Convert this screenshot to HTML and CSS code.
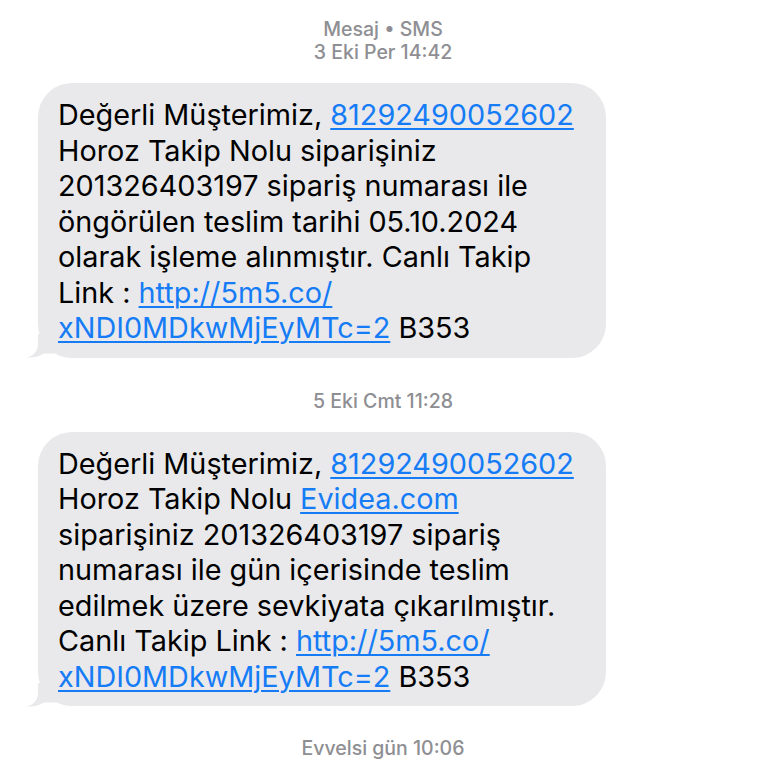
FILE: index.html
```html
<!DOCTYPE html>
<html lang="tr">
<head>
<meta charset="utf-8">
<link rel="stylesheet" href="styles.css">
</head>
<body>
<div class="thread">
  <div class="stamp stamp-top">
    <div>Mesaj • SMS</div>
    <div>3 Eki Per 14:42</div>
  </div>
  <div class="bubble">
    <p class="msg">Değerli Müşterimiz, <a>81292490052602</a><br>Horoz Takip Nolu siparişiniz<br>201326403197 sipariş numarası ile<br>öngörülen teslim tarihi 05.10.2024<br>olarak işleme alınmıştır. Canlı Takip<br>Link : <a>http://5m5.co/<br>xNDI0MDkwMjEyMTc=2</a> B353</p>
    <svg class="tail" width="30" height="24" viewBox="0 0 30 24"><path d="M11 0 L11 10 C11 16 8 21 0 23.5 C7 24 13 22 17 19.5 L30 19.5 L30 0 Z" fill="#e9e9eb"/></svg>
  </div>
  <div class="stamp stamp-mid">5 Eki Cmt 11:28</div>
  <div class="bubble">
    <p class="msg">Değerli Müşterimiz, <a>81292490052602</a><br>Horoz Takip Nolu <a>Evidea.com</a><br>siparişiniz 201326403197 sipariş<br>numarası ile gün içerisinde teslim<br>edilmek üzere sevkiyata çıkarılmıştır.<br>Canlı Takip Link : <a>http://5m5.co/<br>xNDI0MDkwMjEyMTc=2</a> B353</p>
    <svg class="tail" width="30" height="24" viewBox="0 0 30 24"><path d="M11 0 L11 10 C11 16 8 21 0 23.5 C7 24 13 22 17 19.5 L30 19.5 L30 0 Z" fill="#e9e9eb"/></svg>
  </div>
  <div class="stamp stamp-bottom">Evvelsi gün 10:06</div>
</div>
</body>
</html>
```
FILE: styles.css
```css
html, body {
  margin: 0;
  padding: 0;
  background: #ffffff;
}
body {
  width: 768px;
  height: 768px;
  overflow: hidden;
  font-family: Inter, "Liberation Sans", sans-serif;
}
.thread {
  display: flex;
  flex-direction: column;
  padding-top: 18px;
}
.stamp {
  text-align: center;
  color: #8e8e93;
  font-size: 19.5px;
  line-height: 23px;
  font-weight: 500;
  padding-right: 2px;
}
.stamp-top { margin-bottom: 19px; }
.stamp-mid { margin-top: 32px; margin-bottom: 19px; }
.stamp-bottom { margin-top: 31px; }
.bubble {
  position: relative;
  margin-left: 38px;
  width: 568px;
  box-sizing: border-box;
  background: #e9e9eb;
  border-radius: 34px;
  padding: 14px 20px 12px 20px;
}
.msg {
  margin: 0;
  font-size: 28.8px;
  line-height: 35.5px;
  color: #000;
  white-space: nowrap;
}
.msg a {
  color: #157cf6;
  text-decoration: underline;
  text-decoration-thickness: 1.5px;
  text-underline-offset: 3px;
}
.tail {
  position: absolute;
  left: -11px;
  bottom: -0.5px;
  display: block;
}
```
